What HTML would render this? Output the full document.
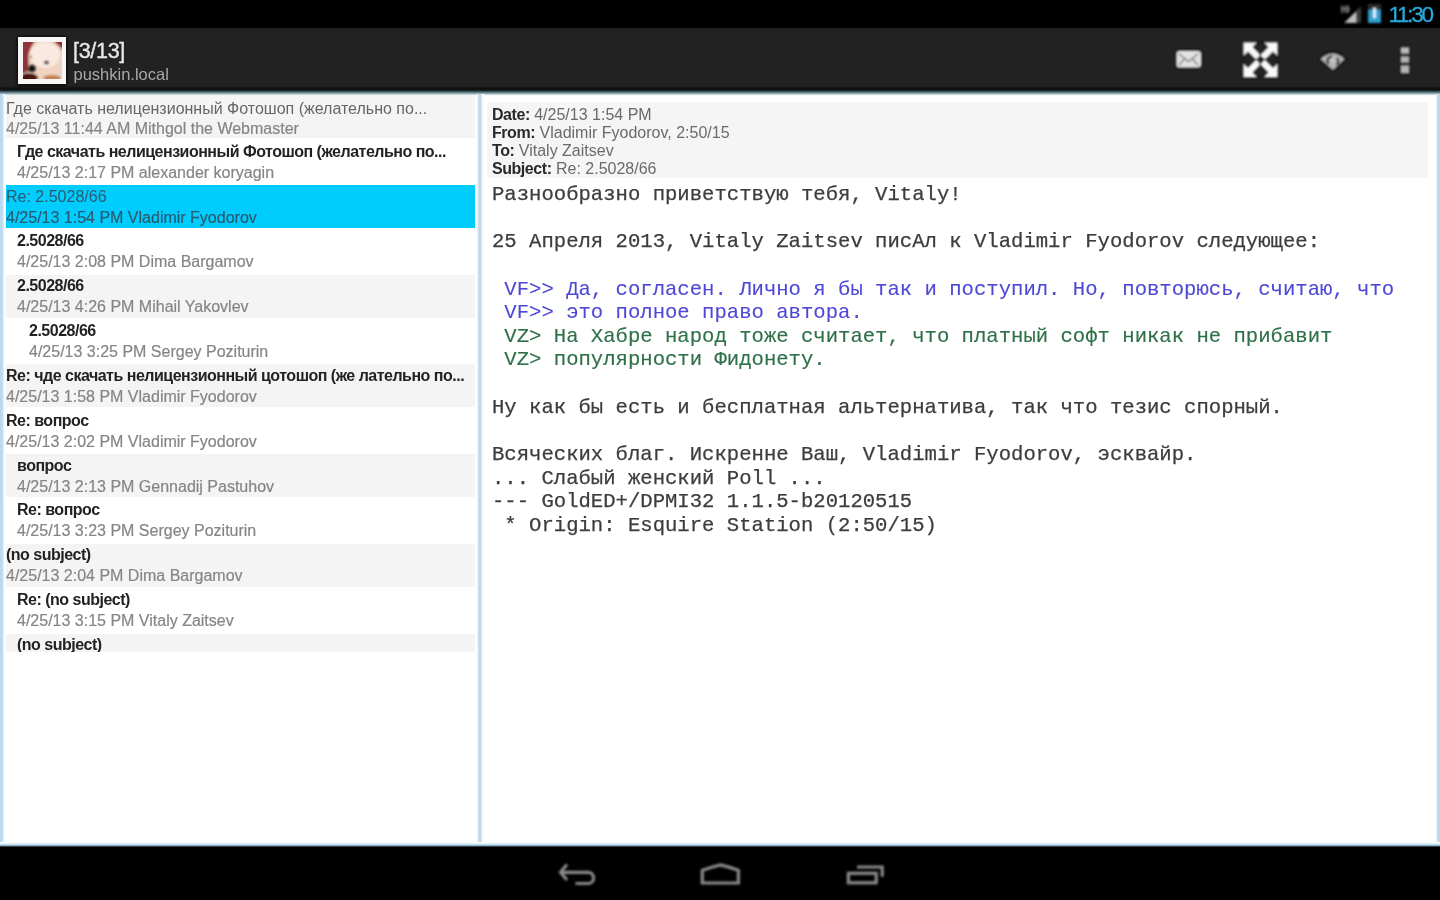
<!DOCTYPE html>
<html><head><meta charset="utf-8">
<style>
*{margin:0;padding:0;box-sizing:border-box}
html,body{width:1440px;height:900px;overflow:hidden;background:#fff;font-family:"Liberation Sans",sans-serif}
.abs{position:absolute}
#status{left:0;top:0;width:1440px;height:28px;background:#000}
#clock{left:1388.5px;top:1.5px;font-size:22.5px;color:#2aa8da;letter-spacing:-2.3px;line-height:26px;filter:blur(0.3px);-webkit-text-stroke:0.3px #2aa8da}
#abar{left:0;top:28px;width:1440px;height:59px;background:#222}
#abshadow{left:0;top:85.5px;width:1440px;height:10px;background:linear-gradient(#222 0px,#121212 2px,#0b0b0b 3px,#18252a 4.5px,#4f6a72 6px,#a9bec4 8px,#f4f8f9 9.3px,#fff 10px)}
#title{left:73px;top:37.5px;font-size:21.5px;color:#e6e6e6;line-height:26px;letter-spacing:-0.3px;-webkit-text-stroke:0.4px #e6e6e6}
#sub{left:73.5px;top:64px;font-size:16.5px;color:#a8a8a8;line-height:20px}
#nav{left:0;top:847px;width:1440px;height:53px;background:#000}
#bline{left:0;top:842px;width:1440px;height:6px;background:linear-gradient(#fff 0px,#e4f4fc 1.5px,#b8d8ee 2.8px,#8aa8bc 3.6px,#30383c 4.6px,#000 6px)}
#lb{left:0;top:94px;width:5px;height:750px;background:linear-gradient(to right,#b9d8f2 0px,#b9d8f2 2px,#d2e6ee 3px,#eef8fa 4px,#fff 5px)}
#mb{left:477px;top:94px;width:7px;height:750px;background:linear-gradient(to right,#fff 0px,#d8e8f2 1px,#c0d8e8 2px,#c2d8e6 3.5px,#d6e8f0 4.5px,#f0f8fa 5.5px,#fff 7px)}
#rb{left:1436px;top:94px;width:4px;height:750px;background:linear-gradient(to right,#fff 0px,#d8e6f2 1px,#bcd6ea 1.8px,#bcd6ea 4px)}
.row{position:absolute;left:6px;width:469px;height:43px;overflow:hidden}
.row.g{background:#f4f4f4}
.row.sel{background:#00cdfd}
.row .s{position:absolute;top:1.5px;font-size:16px;line-height:20px;white-space:nowrap;color:#666}
.row .s.b{font-weight:bold;color:#222;letter-spacing:-0.5px}
.row .d{position:absolute;top:22.5px;font-size:16px;line-height:20px;white-space:nowrap;color:#858585;-webkit-text-stroke:0.2px currentColor}
.row.sel .s,.row.sel .d{color:#2a5a70}
#hdr{left:487px;top:102px;width:941px;height:76px;background:#f5f5f5}
#hdr div{position:absolute;left:5px;font-size:16px;line-height:18px;color:#6a6a6a;white-space:nowrap}
#hdr b{color:#2a2a2a;letter-spacing:-0.45px}
#body{left:492px;top:183px;font-family:"Liberation Mono",monospace;font-size:20.6px;line-height:23.64px;color:#3d3d3d;white-space:pre;-webkit-text-stroke:0.25px currentColor}
.vf{color:#4f48d6;-webkit-text-stroke:0.1px currentColor}
.row .s,.row .d,#hdr div,#body,#title,#sub{filter:blur(0.35px)}
.vz{color:#2e7048;-webkit-text-stroke:0.15px currentColor}
</style></head><body>
<div id="status" class="abs"></div>
<div id="clock" class="abs">11:30</div>
<div id="abar" class="abs"></div>
<div id="abshadow" class="abs"></div>
<div id="title" class="abs">[3/13]</div>
<div id="sub" class="abs">pushkin.local</div>

<div id="lb" class="abs"></div>
<div id="mb" class="abs"></div>
<div id="rb" class="abs"></div>

<div class="row g" style="top:95.3px"><div class="s" style="left:0;top:4px">Где скачать нелицензионный Фотошоп (желательно по...</div><div class="d" style="left:0;top:23.7px">4/25/13 11:44 AM Mithgol the Webmaster</div></div>
<div class="row" style="top:140.15px"><div class="s b" style="left:11px">Где скачать нелицензионный Фотошоп (желательно по...</div><div class="d" style="left:11px">4/25/13 2:17 PM alexander koryagin</div></div>
<div class="row sel" style="top:185.0px"><div class="s" style="left:0">Re: 2.5028/66</div><div class="d" style="left:0">4/25/13 1:54 PM Vladimir Fyodorov</div></div>
<div class="row" style="top:229.85px"><div class="s b" style="left:11px">2.5028/66</div><div class="d" style="left:11px">4/25/13 2:08 PM Dima Bargamov</div></div>
<div class="row g" style="top:274.7px"><div class="s b" style="left:11px">2.5028/66</div><div class="d" style="left:11px">4/25/13 4:26 PM Mihail Yakovlev</div></div>
<div class="row" style="top:319.55px"><div class="s b" style="left:23px">2.5028/66</div><div class="d" style="left:23px">4/25/13 3:25 PM Sergey Poziturin</div></div>
<div class="row g" style="top:364.4px"><div class="s b" style="left:0">Re: чде скачать нелицензионный цотошоп (же лательно по...</div><div class="d" style="left:0">4/25/13 1:58 PM Vladimir Fyodorov</div></div>
<div class="row" style="top:409.25px"><div class="s b" style="left:0">Re: вопрос</div><div class="d" style="left:0">4/25/13 2:02 PM Vladimir Fyodorov</div></div>
<div class="row g" style="top:454.1px"><div class="s b" style="left:11px">вопрос</div><div class="d" style="left:11px">4/25/13 2:13 PM Gennadij Pastuhov</div></div>
<div class="row" style="top:498.95px"><div class="s b" style="left:11px">Re: вопрос</div><div class="d" style="left:11px">4/25/13 3:23 PM Sergey Poziturin</div></div>
<div class="row g" style="top:543.8px"><div class="s b" style="left:0">(no subject)</div><div class="d" style="left:0">4/25/13 2:04 PM Dima Bargamov</div></div>
<div class="row" style="top:588.65px"><div class="s b" style="left:11px">Re: (no subject)</div><div class="d" style="left:11px">4/25/13 3:15 PM Vitaly Zaitsev</div></div>
<div class="row g" style="top:633.5px;height:18.5px"><div class="s b" style="left:11px">(no subject)</div></div>

<div id="hdr" class="abs">
<div style="top:4px"><b>Date:</b> 4/25/13 1:54 PM</div>
<div style="top:22px"><b>From:</b> Vladimir Fyodorov, 2:50/15</div>
<div style="top:40px"><b>To:</b> Vitaly Zaitsev</div>
<div style="top:58px"><b>Subject:</b> Re: 2.5028/66</div>
</div>

<div id="body" class="abs">Разнообразно приветствую тебя, Vitaly!

25 Апреля 2013, Vitaly Zaitsev писАл к Vladimir Fyodorov следующее:

<span class="vf"> VF&gt;&gt; Да, согласен. Лично я бы так и поступил. Но, повторюсь, считаю, что
 VF&gt;&gt; это полное право автора.</span>
<span class="vz"> VZ&gt; На Хабре народ тоже считает, что платный софт никак не прибавит
 VZ&gt; популярности Фидонету.</span>

Ну как бы есть и бесплатная альтернатива, так что тезис спорный.

Всяческих благ. Искренне Ваш, Vladimir Fyodorov, эсквайр.
... Слабый женский Poll ...
--- GoldED+/DPMI32 1.1.5-b20120515
 * Origin: Esquire Station (2:50/15)</div>

<div id="bline" class="abs"></div>
<div id="nav" class="abs"></div>

<svg class="abs" style="left:0;top:0" width="1440" height="900" viewBox="0 0 1440 900">
<defs>
<filter id="bl" x="-20%" y="-20%" width="140%" height="140%"><feGaussianBlur stdDeviation="0.8"/></filter>
<filter id="bl2" x="-20%" y="-20%" width="140%" height="140%"><feGaussianBlur stdDeviation="1.2"/></filter>
<clipPath id="avc"><rect x="23" y="42" width="39" height="37"/></clipPath>
</defs>
<!-- status bar -->
<g filter="url(#bl)">
<polygon points="1344,23 1361,6 1361,23" fill="#3a3a3a"/>
<polygon points="1344.5,23 1356,11.5 1356,23" fill="#bdbdbd"/>
<path d="M1342,5.5 V13 M1342,9 H1345.5 M1345.5,5.5 V13 M1348,5.5 V13 M1348,9 H1350" stroke="#8a8a8a" stroke-width="1.6" fill="none"/>
<rect x="1368" y="4" width="13" height="19" fill="#2e2e2e"/>
<rect x="1368" y="10" width="13" height="13" fill="#2f9fd0"/>
<path d="M1374.5,8 V18" stroke="#d8f0ff" stroke-width="3"/>
</g>
<!-- avatar -->
<rect x="16.5" y="35.5" width="51" height="51" rx="3" fill="#000" opacity="0.6" filter="url(#bl2)"/>
<rect x="18" y="37" width="48" height="47" fill="#f7f5f5"/>
<g clip-path="url(#avc)"><g filter="url(#bl2)">
<rect x="20" y="40" width="45" height="42" fill="#efd2bf"/>
<path d="M20,40 H36 Q29,48 28.5,57 Q28,65 30,71 L20,74 Z" fill="#923038"/>
<path d="M52,40 H65 V53 Q59,45 52,40 Z" fill="#8a2a34"/>
<ellipse cx="45" cy="55" rx="15" ry="13" fill="#f9e9de"/>
<ellipse cx="29" cy="78" rx="9" ry="5" fill="#4a1810"/>
<ellipse cx="52" cy="78" rx="9" ry="3" fill="#c48050"/>
</g><g filter="url(#bl)">
<circle cx="32" cy="68.5" r="3.6" fill="#101410"/>
<ellipse cx="46.5" cy="62.5" rx="2.4" ry="1.8" fill="#5a4c52"/>
<ellipse cx="30.5" cy="57" rx="1.8" ry="1.3" fill="#a89888"/>
</g></g>
<!-- envelope -->
<g filter="url(#bl)">
<rect x="1175" y="49.5" width="27" height="19.5" rx="4" fill="#000"/>
<rect x="1176.5" y="51" width="24.5" height="16.5" rx="3" fill="#e2e2e2"/>
<path d="M1179,54 L1188.5,61.5 L1198,54 M1179,65 L1184.5,59 M1198,65 L1192.5,59" stroke="#777" stroke-width="1.4" fill="none"/>
</g>
<!-- expand arrows -->
<g filter="url(#bl)" stroke="#000" stroke-width="2.2" stroke-linejoin="miter" paint-order="stroke" fill="#fafafa">
<polygon transform="translate(1243.5,42.5)" points="0,0 13.5,0 9,4.5 17.2,12.7 12.7,17.2 4.5,9 0,13.5"/>
<polygon transform="translate(1277.5,42.5) scale(-1,1)" points="0,0 13.5,0 9,4.5 17.2,12.7 12.7,17.2 4.5,9 0,13.5"/>
<polygon transform="translate(1243.5,77) scale(1,-1)" points="0,0 13.5,0 9,4.5 17.2,12.7 12.7,17.2 4.5,9 0,13.5"/>
<polygon transform="translate(1277.5,77) scale(-1,-1)" points="0,0 13.5,0 9,4.5 17.2,12.7 12.7,17.2 4.5,9 0,13.5"/>
</g>
<!-- eye -->
<g filter="url(#bl)">
<path d="M1319.5,59 Q1332.5,46 1345.5,59 L1333,71 Z" fill="#0e0e0e" transform="translate(0,0) scale(1)" stroke="#0e0e0e" stroke-width="2"/>
<path d="M1320.5,59 Q1332.5,48 1344.5,59 L1333,70 Z" fill="#b4b4b4"/>
<path d="M1332,56.5 A4.2,4.2 0 0 0 1328.6,63.5" fill="none" stroke="#111" stroke-width="2"/><path d="M1337,58 A4.2,4.2 0 0 1 1336.5,64.5" fill="none" stroke="#111" stroke-width="2"/>
<circle cx="1332.5" cy="60.5" r="2.2" fill="#c8c8c8"/>
</g>
<!-- overflow -->
<g filter="url(#bl)">
<rect x="1400" y="46.5" width="9.5" height="27.5" fill="#0e0e0e"/>
<rect x="1401" y="47.5" width="8" height="6" fill="#bdbdbd"/>
<rect x="1401" y="56.5" width="8" height="6" fill="#b4b4b4"/>
<rect x="1401" y="65.5" width="8" height="7.5" fill="#b4b4b4"/>
</g>
<!-- nav -->
<g filter="url(#bl)" stroke="#8a8a8a" fill="none" stroke-width="3.2">
<path d="M567,864.5 L560.5,872.3 L567,880"/>
<path d="M562,872.3 H588 A5.6,5.6 0 0 1 588,883.5 H575.5"/>
<path d="M702.3,883 V870.3 L711.6,867.2 L720.4,865 L729.8,867.4 L738.4,870.3 V883 Z"/>
<rect x="848.4" y="873.3" width="27.8" height="9.5"/>
<path d="M857,867 H882.2 V876.8"/>
</g>
</svg>
</body></html>
